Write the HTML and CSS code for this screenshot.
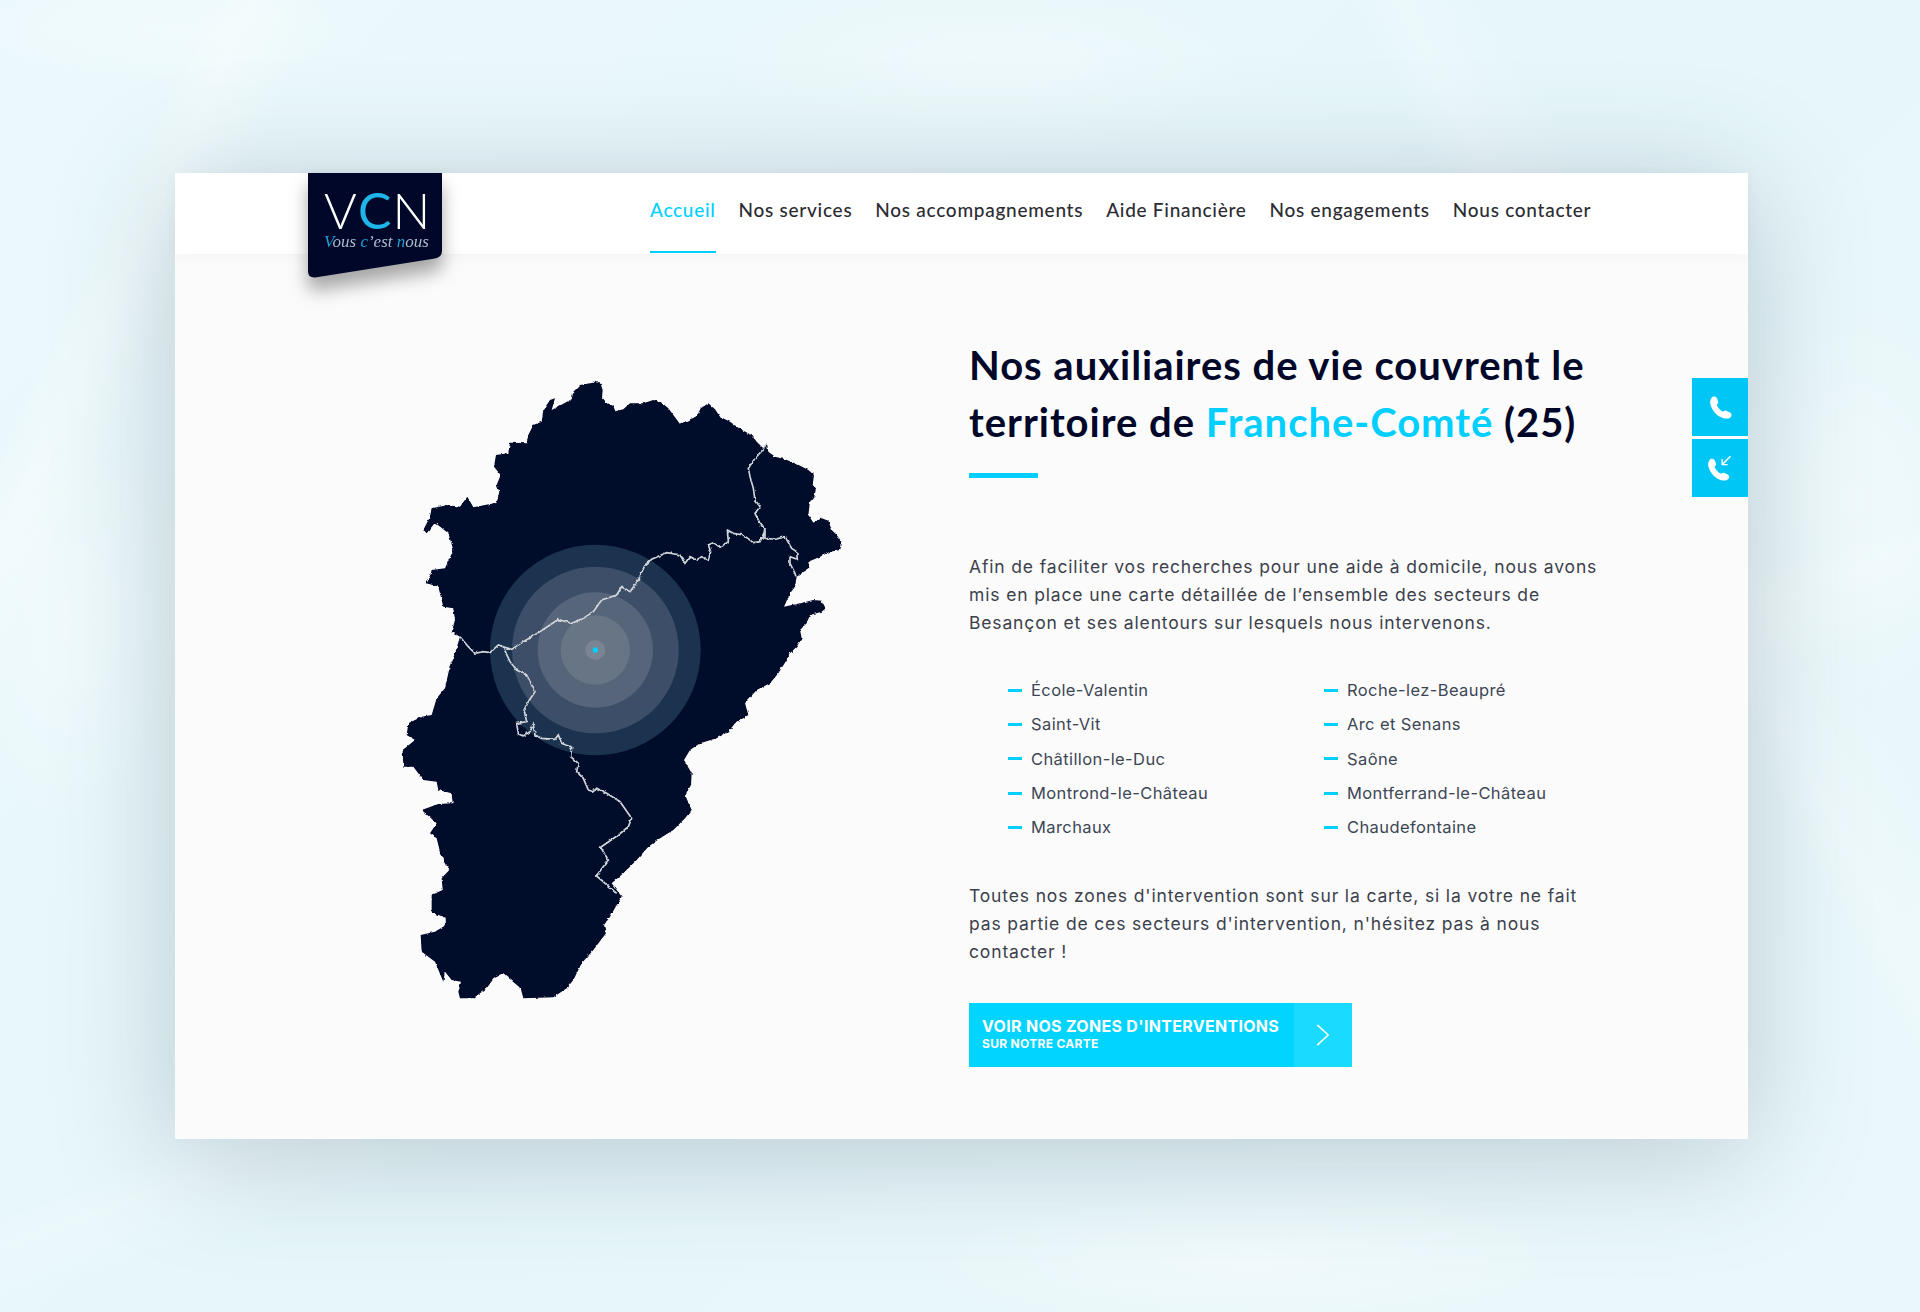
FILE: index.html
```html
<!DOCTYPE html>
<html lang="fr">
<head>
<meta charset="utf-8">
<title>VCN - Nos auxiliaires de vie</title>
<link rel="stylesheet" href="styles.css">
</head>
<body>
<div class="page">
  <div class="panel">
    <a class="logo" href="#">
      <svg class="logo-shape" viewBox="0 0 134 106" width="134" height="106"><path d="M0 0H134V78Q134 84 127 85.500L7 104.500Q0 105 0 98Z" fill="#000729"/></svg>
      <span class="logo-mark">V<span class="blue">C</span>N</span>
      <span class="logo-tag"><span class="blue-t">V</span>ous <span class="blue-t">c</span>’est <span class="blue-t">n</span>ous</span>
    </a>
    <header class="header">
      <nav class="nav">
        <a class="nav-link active" href="#">Accueil</a>
        <a class="nav-link" href="#">Nos services</a>
        <a class="nav-link" href="#">Nos accompagnements</a>
        <a class="nav-link" href="#">Aide Financière</a>
        <a class="nav-link" href="#">Nos engagements</a>
        <a class="nav-link" href="#">Nous contacter</a>
      </nav>
    </header>
    <main class="main">
      <div class="map-col">
        <svg class="map" viewBox="0 0 1440 1950" width="480" height="650" role="img" aria-label="Carte de la Franche-Comté">
          <defs>
            <filter id="rough" x="-5%" y="-5%" width="110%" height="110%">
              <feTurbulence type="fractalNoise" baseFrequency="0.09" numOctaves="2" seed="4"/>
              <feDisplacementMap in="SourceGraphic" scale="9" xChannelSelector="R" yChannelSelector="G"/>
            </filter>
          </defs>
          <path filter="url(#rough)" fill="#000729" d="M650 62L662 72L668 90L666 112L680 128L700 138L706 154L730 148L750 130L790 130L820 120L845 128L865 145L880 165L900 192L930 178L950 170L962 145L985 130L1005 148L1020 170L1050 185L1080 207L1115 225L1130 245L1150 265L1160 250L1165 275L1185 290L1215 298L1250 312L1285 330L1302 345L1298 375L1308 385L1303 410L1290 425L1285 465L1300 488L1325 475L1345 482L1355 510L1370 525L1387 548L1380 570L1350 575L1320 590L1285 605L1288 625L1265 640L1250 650L1245 680L1230 700L1212 740L1250 732L1300 720L1325 722L1337 745L1325 755L1290 765L1280 790L1260 810L1265 835L1250 860L1230 880L1220 900L1195 940L1170 970L1130 990L1095 1030L1105 1065L1065 1090L1045 1115L1010 1135L960 1150L930 1170L912 1200L935 1240L933 1275L915 1305L935 1350L915 1375L880 1410L840 1435L805 1460L770 1500L730 1540L695 1570L725 1610L710 1635L690 1670L672 1695L678 1720L640 1770L605 1810L580 1860L560 1885L520 1912L430 1915L422 1885L370 1840L345 1850L320 1885L280 1915L240 1915L235 1895L243 1865L215 1860L195 1835L190 1865L165 1805L125 1775L122 1725L165 1715L198 1695L197 1675L155 1655L155 1605L188 1590L185 1555L208 1530L195 1505L180 1475L170 1435L150 1420L170 1390L125 1350L175 1332L218 1330L215 1300L175 1290L170 1265L130 1260L100 1220L70 1220L68 1170L105 1140L80 1125L85 1090L125 1070L155 1065L170 1015L195 985L205 940L215 900L200 945L225 880L240 830L215 815L225 780L220 745L190 740L175 680L140 670L150 650L155 630L195 625L220 570L205 520L165 488L140 520L130 510L150 470L155 445L205 435L240 440L262 410L280 442L350 428L358 395L350 375L362 345L342 320L348 285L385 280L390 248L440 250L445 225L460 195L485 185L490 150L510 120L525 115L515 150L575 118L580 95L600 75L640 68Z"/>
          <circle class="ring" cx="646" cy="870" r="316"/>
          <circle class="ring-2" cx="646" cy="870" r="250"/>
          <circle class="ring-3" cx="646" cy="870" r="173"/>
          <circle class="ring-4" cx="646" cy="870" r="104"/>
          <circle class="ring-5" cx="646" cy="870" r="30"/>
          <circle class="ring-dot" cx="646" cy="870" r="8"/>
          <g class="borders" filter="url(#rough)">
            <path d="M1160 250L1148 270L1125 295L1105 325L1110 350L1120 385L1125 420L1140 440L1125 460L1140 490L1155 510L1148 540"/>
            <path d="M240 830L265 860L285 880L310 875L330 878L355 855L375 862L395 868L430 845L480 815L510 795L535 778L575 790L610 775L640 755L665 720L710 705L725 680L750 695L775 660L795 615L815 598L860 578L900 585L915 610L930 590L950 600L965 590L985 600L992 575L985 555L1000 548L1020 562L1045 545L1042 510L1060 520L1090 525L1120 548L1140 545L1155 512L1155 535L1185 538L1215 530L1235 565L1250 575L1252 598L1230 590L1230 610L1245 640L1248 650"/>
            <path d="M370 862L390 905L410 930L440 945L465 995L445 1025L432 1050L440 1085L410 1090L415 1122L430 1128L450 1115L460 1095L465 1125L485 1135L525 1138L535 1125L545 1150L575 1162L572 1190L595 1210L590 1235L610 1255L625 1290L640 1295L650 1285L680 1300L720 1325L755 1375L745 1400L715 1425L662 1462L685 1500L655 1540L650 1548L710 1600"/>
          </g>
        </svg>
      </div>
      <section class="content">
        <h1 class="title">Nos auxiliaires de vie couvrent le<br>territoire de <span class="accent">Franche-Comté</span> (25)</h1>
        <div class="rule"></div>
        <p class="text text-intro">Afin de faciliter vos recherches pour une aide à domicile, nous avons<br>mis en place une carte détaillée de l’ensemble des secteurs de<br>Besançon et ses alentours sur lesquels nous intervenons.</p>
        <ul class="towns">
          <li>École-Valentin</li>
          <li>Roche-lez-Beaupré</li>
          <li>Saint-Vit</li>
          <li>Arc et Senans</li>
          <li>Châtillon-le-Duc</li>
          <li>Saône</li>
          <li>Montrond-le-Château</li>
          <li>Montferrand-le-Château</li>
          <li>Marchaux</li>
          <li>Chaudefontaine</li>
        </ul>
        <p class="text">Toutes nos zones d'intervention sont sur la carte, si la votre ne fait<br>pas partie de ces secteurs d'intervention, n'hésitez pas à nous<br>contacter !</p>
        <a class="cta" href="#">
          <span class="cta-label"><strong>VOIR NOS ZONES D'INTERVENTIONS</strong><small>SUR NOTRE CARTE</small></span>
          <span class="cta-arrow"><svg viewBox="0 0 16 26" width="14" height="24"><path d="M2 2L14 13L2 24" fill="none" stroke="#fff" stroke-width="1.800" stroke-linecap="round" stroke-linejoin="round"/></svg></span>
        </a>
      </section>
    </main>
    <div class="side">
      <a class="side-btn" href="#" aria-label="Appeler">
        <svg viewBox="0 0 24 24" width="27" height="27"><path class="phone" d="M4 3.500C5.500 1.500 8 2 9 4L10 7C10.300 8 9.500 9 8.500 9.500C9.500 12 11.500 14.500 14.500 15.800C15.300 14.800 16.500 14.500 17.500 15L20.500 16.500C22.500 18 22 20 20.500 21C19 22 16 22.500 12 20.500C7 18 4 13 3 9C2.500 7 3 5 4 3.500Z"/></svg>
      </a>
      <a class="side-btn" href="#" aria-label="Être rappelé">
        <svg viewBox="0 0 28 28" width="31" height="31"><path class="phone" d="M4 6.500C5.500 4.500 8 5 9 7L10 10C10.300 11 9.500 12 8.500 12.500C9.500 15 11.500 17.500 14.500 18.800C15.300 17.800 16.500 17.500 17.500 18L20.500 19.500C22.500 21 22 23 20.500 24C19 25 16 25.500 12 23.500C7 21 4 16 3 12C2.500 10 3 8 4 6.500Z"/><path d="M23 3L15.500 10.500M15.500 5.500V10.500H20.500" fill="none" stroke="#fff" stroke-width="1.300"/></svg>
      </a>
    </div>
  </div>
</div>
</body>
</html>
```

FILE: styles.css
```css
* { box-sizing: border-box; }
html, body { margin: 0; padding: 0; }
body { font-family: "Inter", "Liberation Sans", sans-serif; color: #3a3f4a; }
a { text-decoration: none; color: inherit; }

.page {
  height: 1312px;
  padding: 173px 172px 0 175px;
  overflow: hidden;
  background-color: #e9f7fb;
  background-image:
    linear-gradient(115deg, transparent 8%, rgba(255,255,255,.28) 10%, transparent 13%),
    linear-gradient(62deg, transparent 78%, rgba(255,255,255,.22) 80%, transparent 84%),
    linear-gradient(160deg, transparent 60%, rgba(255,255,255,.2) 62%, transparent 66%),
    radial-gradient(ellipse 300px 90px at 180px 30px, rgba(255,255,255,.3), transparent 70%),
    radial-gradient(ellipse 420px 120px at 1000px 60px, rgba(255,255,255,.3), transparent 70%),
    radial-gradient(ellipse 200px 300px at 1850px 500px, rgba(255,255,255,.35), transparent 70%),
    radial-gradient(ellipse 180px 300px at 70px 620px, rgba(255,255,255,.35), transparent 70%),
    radial-gradient(ellipse 500px 110px at 1250px 1260px, rgba(255,255,255,.4), transparent 70%),
    linear-gradient(135deg, #ecf9fc, #e6f6fa 50%, #ebf8fb);
}

.panel {
  position: relative;
  height: 966px;
  background: #fbfbfb;
  box-shadow: 0 14px 110px rgba(55, 80, 95, .27);
}

/* Logo */
.logo {
  position: absolute;
  left: 133px;
  top: 0;
  width: 134px;
  height: 106px;
  z-index: 3;
  color: #fff;
  filter: drop-shadow(0 13px 9px rgba(0,0,0,.34));
}
.logo-shape { position: absolute; left: 0; top: 0; }
.logo-mark {
  position: absolute;
  left: 16px;
  top: 16px;
  font: 300 50px/42px "Lato", sans-serif;
  letter-spacing: 1.2px;
  white-space: nowrap;
}
.blue { color: #1fb4ea; font-weight: 400; }
.logo-tag {
  position: absolute;
  left: 16px;
  top: 60px;
  font: italic 400 17px/18px "Liberation Serif", serif;
  color: #a9bccd;
  white-space: nowrap;
}
.blue-t { color: #1a9fd6; }

/* Header */
.header {
  height: 81px;
  padding-left: 475px;
  background: #fff;
  box-shadow: 0 2px 14px rgba(0,0,0,.035);
  position: relative;
}
.nav { display: flex; gap: 23px; height: 81px; }
.nav-link {
  display: block;
  height: 80px;
  padding-top: 25px;
  font: 500 19px/24px "Lato", sans-serif;
  letter-spacing: .72px;
  color: #2c2c33;
  border-bottom: 2px solid transparent;
  white-space: nowrap;
}
.nav-link.active { color: #00cfff; border-bottom-color: #00cfff; }

/* Map */
.main { display: flex; align-items: flex-start; }
.map-col { flex: 0 0 794px; padding: 106px 0 0 205px; }
.map { display: block; }
.ring { fill: #1c3350; }
.ring-2 { fill: #3d4e68; }
.ring-3 { fill: #566579; }
.ring-4 { fill: #687585; }
.ring-5 { fill: #7a8493; }
.ring-dot { fill: #00cfff; }
.borders path { fill: none; stroke: #d2d6db; stroke-width: 5; }

/* Content */
.content { flex: 1; padding-top: 83px; position: relative; }
.title {
  margin: 0;
  font: 700 40px/57px "Lato", sans-serif;
  letter-spacing: .97px;
  color: #000729;
  white-space: nowrap;
}
.accent { color: #00cfff; }
.rule { width: 69px; height: 5px; margin: 22px 0 0 0; background: #00cfff; }
.text {
  margin: 0;
  font-size: 17.500px;
  line-height: 28px;
  letter-spacing: .85px;
  color: #3c414c;
  white-space: nowrap;
}
.text-intro { margin-top: 75px; }
.towns {
  list-style: none;
  margin: 36px 0 38px;
  padding: 0 0 0 62px;
  display: grid;
  grid-template-columns: 316px 1fr;
  font-size: 16.500px;
  line-height: 34.300px;
  letter-spacing: .4px;
  color: #3c4654;
}
.towns li { display: flex; align-items: center; }
.towns li::before {
  content: "";
  flex: 0 0 14px;
  height: 3px;
  margin: 0 9px 0 -23px;
  background: #00cfff;
}

/* Button */
.cta {
  display: flex;
  width: 383px;
  height: 64px;
  margin: 37px 0 0 0;
  background: #1adbff;
  color: #fff;
}
.cta-label {
  flex: 0 0 325px;
  display: flex;
  flex-direction: column;
  justify-content: center;
  padding: 0 0 3px 13px;
  background: #00d4ff;
}
.cta-label strong { font-size: 16px; line-height: 20px; font-weight: 700; letter-spacing: .3px; white-space: nowrap; }
.cta-label small { font-size: 12px; line-height: 16px; font-weight: 700; letter-spacing: .3px; }
.cta-arrow { flex: 1; display: flex; align-items: center; justify-content: center; }

/* Side buttons */
.side {
  position: absolute;
  right: 0;
  top: 205px;
  display: flex;
  flex-direction: column;
  gap: 3px;
}
.side-btn {
  width: 56px;
  height: 58px;
  display: flex;
  align-items: center;
  justify-content: center;
  background: #00c6f6;
}
.phone { fill: #fff; }
```
